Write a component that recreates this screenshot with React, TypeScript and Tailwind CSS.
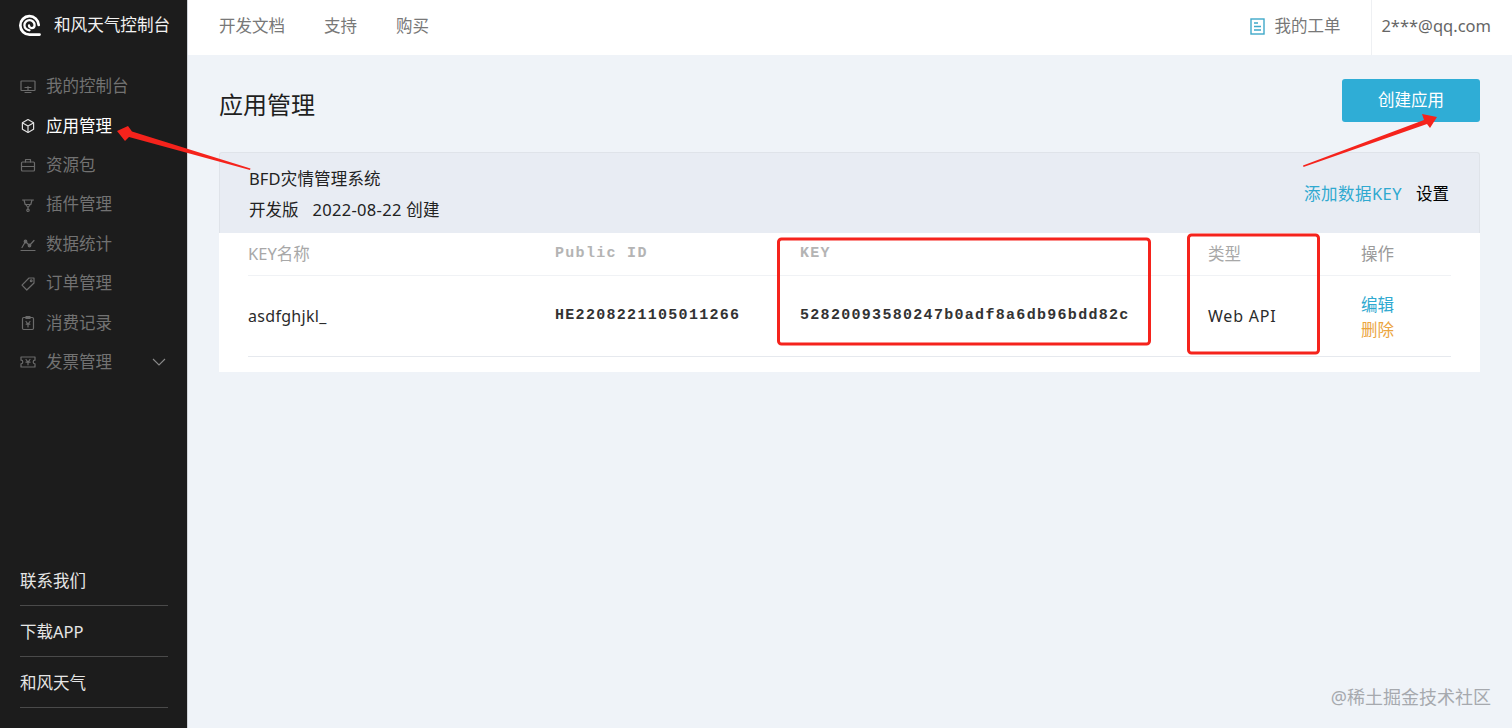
import React from "react";

const CJK = "font-['Noto_Sans','Noto_Sans_CJK_SC',sans-serif]";
const MONO = "font-['Liberation_Mono',monospace]";

function Ico({ children, cls = "text-[#6b6b6b]" }: { children: React.ReactNode; cls?: string }) {
  return (
    <svg viewBox="0 0 16 16" fill="none" stroke="currentColor" strokeWidth="1.2" strokeLinecap="round" strokeLinejoin="round" className={`w-[16px] h-[16px] shrink-0 ${cls}`}>
      {children}
    </svg>
  );
}

const icons: Record<string, React.ReactNode> = {
  monitor: (<><rect x="1" y="2" width="14" height="9.5" rx="0.5" /><path d="M8 7.5v4M5 13.5h6M5 8.5h6" /></>),
  box: (<><path d="M8 1.5l5.6 3.2v6.6L8 14.5l-5.6-3.2V4.7z" /><path d="M2.6 5L8 8l5.4-3M8 8v6" /></>),
  bag: (<><rect x="1.5" y="5" width="13" height="9" rx="1" /><path d="M5.5 5V2.5h5V5M1.5 9.5h13" /></>),
  plug: (<><path d="M2.5 3h11M4 3l1.2 4.5h5.6L12 3M5.6 7.5L8 10.5l2.4-3M8 10.5v1.5" /><circle cx="8" cy="13.3" r="1.2" /></>),
  chart: (<><path d="M1 14.5h14" /><path d="M2 11.5L5.5 5.5 9.5 9.5 14 4.5" /><circle cx="5.5" cy="5.5" r="1.3" fill="currentColor" /><circle cx="9.5" cy="9.5" r="1.3" fill="currentColor" /></>),
  tag: (<><path d="M9 2h5v5l-7.2 7L2 9.2z" /><circle cx="11.2" cy="4.8" r="0.9" /></>),
  bill: (<><rect x="2.5" y="2.5" width="11" height="12" rx="1.2" /><path d="M6 1.5h4v2H6zM6 6.5L8 9l2-2.5M6.2 9.2h3.6M8 9v3" /></>),
  ticket: (<><path d="M1 3h14v3.2a1.8 1.8 0 000 3.6V13H1V9.8a1.8 1.8 0 000-3.6z" /><path d="M6 5.5L8 8l2-2.5M6 8.2h4M8 8v2.8" /></>),
};

const nav = [
  { t: "我的控制台", i: "monitor" },
  { t: "应用管理", i: "box", active: true },
  { t: "资源包", i: "bag" },
  { t: "插件管理", i: "plug" },
  { t: "数据统计", i: "chart" },
  { t: "订单管理", i: "tag" },
  { t: "消费记录", i: "bill" },
  { t: "发票管理", i: "ticket", chevron: true },
];

function Sidebar() {
  return (
    <aside className="w-[188px] h-full shrink-0 bg-[#1c1c1c] flex flex-col justify-between border-r border-[#cfd3d8]">
      <div>
        <div className="h-[50px] pl-[18px] flex items-center gap-[13px] text-[16.6px]">
          <svg viewBox="0 0 24 24" className="w-[23px] h-[23px] shrink-0" fill="none" stroke="white" strokeLinecap="round">
            <path d="M22.5 21.5H12A9.6 9.6 0 1121.6 11.5" strokeWidth="2.8" />
            <path d="M12 17a5.3 5.3 0 115.3-5.3c0 1.9-1.4 3-3 3a2.8 2.8 0 01-2.8-2.8" strokeWidth="2.4" />
          </svg>
          <span className="text-[#f2f2f2]">和风天气控制台</span>
        </div>
        <nav className="pt-[17px] flex flex-col">
          {nav.map((n) => (
            <div key={n.t} className="h-[39.4px] pl-[20px] pr-[20px] flex items-center gap-[10px]">
              <Ico cls={n.active ? "text-[#e0e0e0]" : "text-[#6b6b6b]"}>{icons[n.i]}</Ico>
              <span className={`text-[16.5px] ${n.active ? "text-white" : "text-[#727272]"}`}>{n.t}</span>
              {n.chevron && (
                <svg viewBox="0 0 16 16" className="w-[16px] h-[16px] ml-auto text-[#8a8a8a]" fill="none" stroke="currentColor" strokeWidth="1.1">
                  <path d="M2 5l6 6 6-6" />
                </svg>
              )}
            </div>
          ))}
        </nav>
      </div>
      <div className="px-[20px] pb-[20px]">
        {["联系我们", "下载APP", "和风天气"].map((t) => (
          <div key={t} className="h-[51px] pt-[2px] flex items-center border-b border-[#4a4a4a] text-[#e6e6e6] text-[16.5px] w-[148px]">
            {t}
          </div>
        ))}
      </div>
    </aside>
  );
}

function TopBar() {
  return (
    <header className="h-[55px] shrink-0 bg-white flex items-center text-[16.5px] text-[#787878]">
      <div className="pl-[31px] pb-[2px] flex gap-[39px]">
        <span>开发文档</span>
        <span>支持</span>
        <span>购买</span>
      </div>
      <div className="ml-auto h-full flex items-center">
        <div className="h-full flex items-center gap-[9px] pr-[31px] pb-[2px]">
          <svg viewBox="0 0 15 17" className="w-[15px] h-[17px] text-[#3fa9c9]" fill="none" stroke="currentColor" strokeWidth="1.4">
            <rect x="1" y="1" width="13" height="15" />
            <path d="M4 5h4M4 8.5h7M4 12h7" />
          </svg>
          <span>我的工单</span>
        </div>
        <div className="h-full flex items-center border-l border-[#eef0f3] pl-[9px] pr-[21px] pb-[3px] text-[#666] text-[16.5px]">2***@qq.com</div>
      </div>
    </header>
  );
}

const cols = "grid grid-cols-[307px_245px_408px_153px_89px]";

function Table() {
  return (
    <div className="bg-white px-[29px] pb-[15px]">
      <div className={`${cols} h-[43px] items-center border-b border-[#f0f2f5] text-[16.5px] text-[#a8a8a8]`}>
        <span>KEY名称</span>
        <span className={`${MONO} text-[15px] tracking-[1.3px] font-bold text-[#b4b4b4]`}>Public ID</span>
        <span className={`${MONO} text-[15px] tracking-[1.3px] font-bold text-[#b4b4b4]`}>KEY</span>
        <span>类型</span>
        <span className="text-[#9a9a9a]">操作</span>
      </div>
      <div className={`${cols} h-[81px] items-center border-b border-[#e6e9ee] text-[#2b2b2b]`}>
        <span className="text-[16px] tracking-[0.3px]">asdfghjkl_</span>
        <span className={`${MONO} text-[15px] tracking-[1.3px] font-bold text-[#333]`}>HE2208221105011266</span>
        <span className={`${MONO} text-[15px] tracking-[1.3px] font-bold text-[#333]`}>52820093580247b0adf8a6db96bdd82c</span>
        <span className="text-[16px] tracking-[0.8px] -mt-[1px]">Web API</span>
        <div className="flex flex-col text-[16.5px] leading-[24.5px] pt-[3px]">
          <span className="text-[#2fa9d0]">编辑</span>
          <span className="text-[#eba53f]">删除</span>
        </div>
      </div>
    </div>
  );
}

function Card() {
  return (
    <section className="mt-[21px]">
      <div className="h-[81px] bg-[#e8ecf3] border border-b-0 border-[#dfe3e9] rounded-t-[3px] pl-[29px] pr-[30px] flex items-center justify-between">
        <div className="flex flex-col gap-[8px] text-[#222] text-[16.5px] leading-[23px] pt-[1px]">
          <span className="tracking-[0.15px]">BFD灾情管理系统</span>
          <span>开发版<span className="ml-[14px] tracking-[0.3px]">2022-08-22 创建</span></span>
        </div>
        <div className="flex gap-[14px] text-[16.5px] pt-[2px]">
          <span className="text-[#2fa9d0] tracking-[0.45px]">添加数据KEY</span>
          <span className="text-black">设置</span>
        </div>
      </div>
      <Table />
    </section>
  );
}

function Overlay() {
  return (
    <svg viewBox="0 0 1512 728" className="absolute inset-0 w-[1512px] h-[728px] pointer-events-none" fill="none">
      <polygon points="117,131 128,126 132,131.5 250.5,168.5 250,170 129,137 125,141" fill="#f5231c" />
      <polygon points="1437,117 1422,114 1424,120 1303,165.5 1303.5,167 1427,124 1430,128" fill="#f5231c" />
      <rect x="778.5" y="239" width="371" height="105" rx="3" stroke="#f5231c" strokeWidth="3" />
      <rect x="1188.5" y="235" width="130" height="118" rx="3" stroke="#f5231c" strokeWidth="3" />
    </svg>
  );
}

export default function App() {
  return (
    <div className={`relative w-[1512px] h-[728px] overflow-hidden flex bg-[#eff3f8] ${CJK}`}>
      <Sidebar />
      <main className="flex-1 min-w-0 flex flex-col">
        <TopBar />
        <div className="pl-[31px] pr-[32px] pt-[24px]">
          <div className="flex items-start justify-between">
            <h1 className="text-[24px] leading-[52px] text-[#1f1f1f]">应用管理</h1>
            <button className="w-[138px] h-[43px] rounded-[3px] bg-[#2fadd6] text-white text-[16.5px]">创建应用</button>
          </div>
          <Card />
        </div>
      </main>
      <Overlay />
      <span className="absolute right-[21px] bottom-[17px] text-[18px] leading-[28px] text-[#a6a9ae]">@稀土掘金技术社区</span>
    </div>
  );
}
